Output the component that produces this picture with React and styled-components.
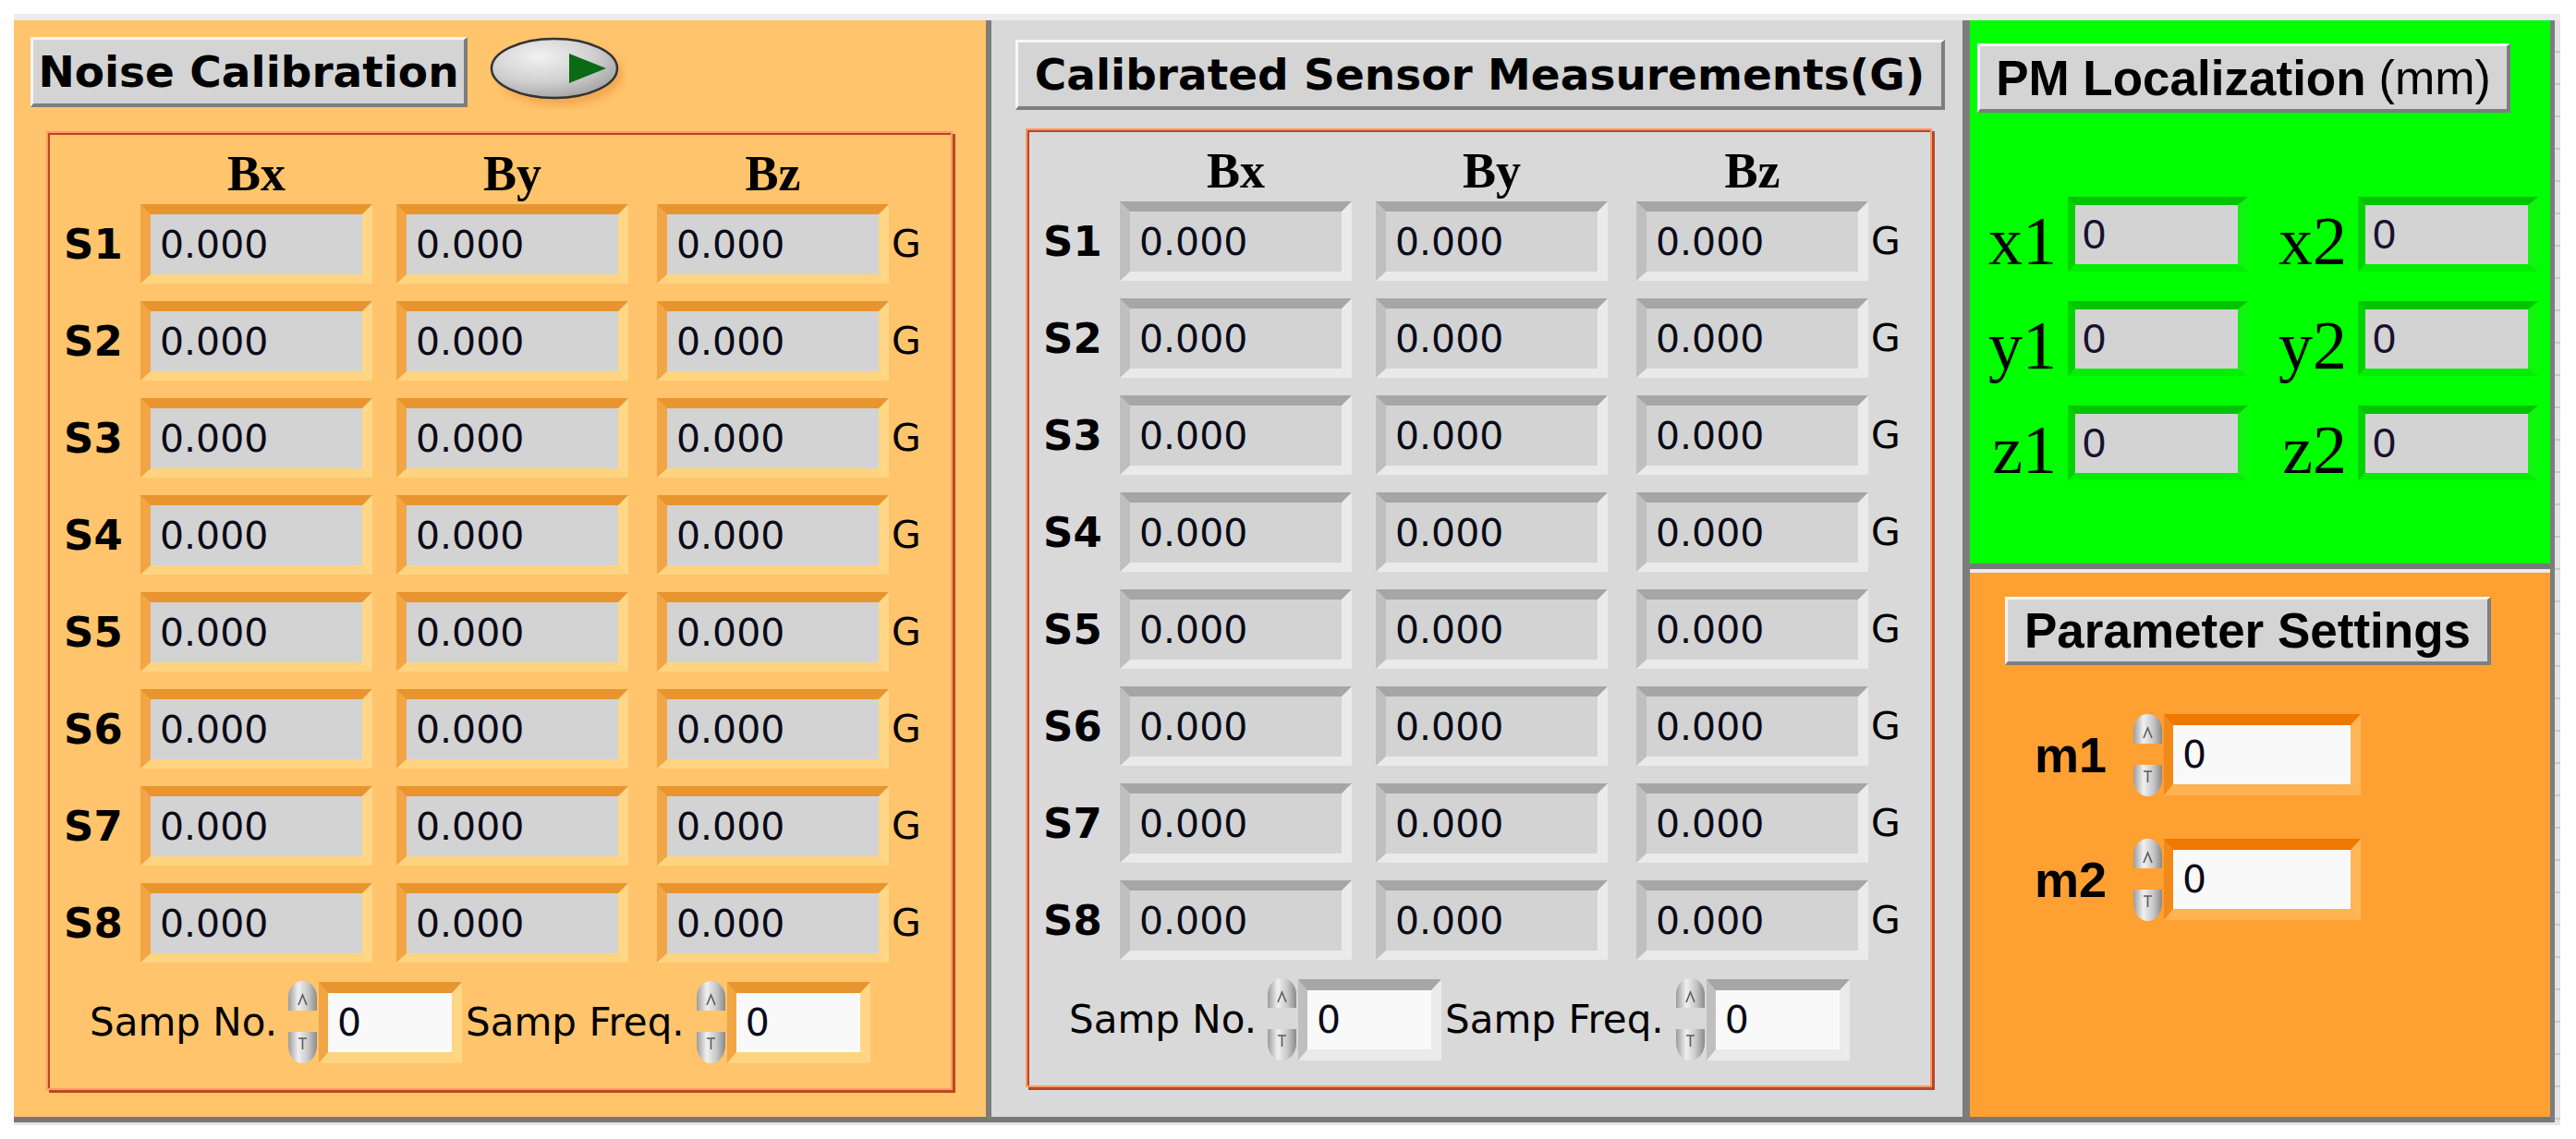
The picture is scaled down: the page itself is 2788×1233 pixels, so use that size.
import React from "react";
import styled, { createGlobalStyle } from "styled-components";

const DEJAVU = `"DejaVu Sans", Verdana, sans-serif`;
const ARIAL = `"Liberation Sans", Arial, sans-serif`;
const TIMES = `"Liberation Serif", "Times New Roman", serif`;

const themes = {
  amber: {
    panel: "#FFC46C",
    top: "#E8952F",
    left: "#F2A544",
    right: "#FFD786",
    bottom: "#FFD480",
  },
  silver: {
    panel: "#D9D9D9",
    top: "#A6A6A6",
    left: "#BFBFBF",
    right: "#EBEBEB",
    bottom: "#EAEAEA",
  },
};

const GlobalStyle = createGlobalStyle`
  html, body {
    margin: 0;
    background: #ffffff;
  }
  body {
    width: 2788px;
    height: 1233px;
    overflow: hidden;
  }
`;

const Page = styled.div`
  padding: 15px 0 0 15px;
`;

const Frame = styled.div`
  display: flex;
  width: 2756px;
  border-top: 7px solid #ececec;
  border-bottom: 3px solid #e6e6e6;
`;

const Panel = styled.section`
  width: ${(p) => p.$w}px;
  padding-top: ${(p) => p.$padTop}px;
  height: ${(p) => 1187 - p.$padTop}px;
  background: ${(p) => p.$bg};
  border-right: ${(p) => p.$edge}px solid #7c7c7c;
  border-bottom: 6px solid #787878;
`;

const TitleRow = styled.div`
  display: flex;
  align-items: flex-start;
  gap: 22px;
  margin-left: ${(p) => p.$inset}px;
`;

const Caption = styled.div`
  box-sizing: border-box;
  width: ${(p) => p.$w}px;
  height: ${(p) => p.$h || 76}px;
  margin-left: ${(p) => p.$inset || 0}px;
  display: flex;
  align-items: center;
  justify-content: center;
  background: #d4d4d4;
  border-top: 3px solid #f6f6f6;
  border-left: 3px solid #f6f6f6;
  border-right: 4px solid #7e7e7e;
  border-bottom: 4px solid #7e7e7e;
  font-family: ${(p) => (p.$face === "arial" ? ARIAL : DEJAVU)};
  font-size: ${(p) => (p.$face === "arial" ? 53 : 47)}px;
  font-weight: bold;
  color: #000;
  white-space: nowrap;

  small {
    font-size: 52px;
    font-weight: normal;
    margin-left: 14px;
  }
`;

const Groove = styled.div`
  box-sizing: border-box;
  width: 981px;
  height: 1038px;
  margin: ${(p) => p.$gap}px 0 0 ${(p) => p.$inset}px;
  padding: 17px 0 0 17px;
  border: 2px solid #ff9a68;
  box-shadow: inset 2px 2px 0 #b8481e, 3px 3px 0 #b8481e;
`;

const Columns = styled.div`
  display: grid;
  grid-template-columns: 83px 277px 282px 254px auto;
  align-items: center;
`;

const HeadRow = styled(Columns)`
  height: 54px;
  margin-bottom: 6px;
`;

const HeadCell = styled.div`
  width: 251px;
  text-align: center;
  font-family: ${TIMES};
  font-size: 54px;
  font-weight: bold;
  line-height: 54px;
  color: #000;
`;

const Rows = styled.div`
  display: flex;
  flex-direction: column;
  gap: 19px;
`;

const Row = styled(Columns)`
  height: 86px;
`;

const RowLabel = styled.div`
  font-family: ${DEJAVU};
  font-size: 45px;
  font-weight: bold;
  color: #000;
`;

const Readout = styled.div`
  box-sizing: border-box;
  width: 251px;
  height: 86px;
  display: flex;
  align-items: center;
  padding-left: 10px;
  background: #d3d3d3;
  border-style: solid;
  border-width: 11px 11px 10px 11px;
  border-color: ${(p) => p.$t.top} ${(p) => p.$t.right} ${(p) => p.$t.bottom}
    ${(p) => p.$t.left};
  font-family: ${DEJAVU};
  font-size: 41px;
  color: #0a0a18;
`;

const Unit = styled.div`
  font-family: ${DEJAVU};
  font-size: 41px;
  color: #000;
`;

const ControlRow = styled.div`
  display: flex;
  align-items: center;
  height: 91px;
  margin-top: 19px;
  padding-left: 28px;
`;

const CtrlLabel = styled.span`
  font-family: ${DEJAVU};
  font-size: 42px;
  color: #000;
  margin-left: ${(p) => p.$gap || 0}px;
  margin-right: ${(p) => p.$after || 0}px;
`;

const NumInput = styled.div`
  box-sizing: border-box;
  width: ${(p) => p.$w || 155}px;
  height: 88px;
  display: flex;
  align-items: center;
  padding-left: 10px;
  background: #f9f9f9;
  border-style: solid;
  border-width: 12px 11px 12px 10px;
  border-color: ${(p) => p.$t.top} ${(p) => p.$t.right} ${(p) => p.$t.bottom}
    ${(p) => p.$t.left};
  font-family: ${DEJAVU};
  font-size: 41px;
  color: #0a0a18;
`;

const SpinSvg = styled.svg`
  display: block;
  flex: none;
`;

const RightColumn = styled.div`
  width: 628px;
  display: flex;
  flex-direction: column;
  border-right: 5px solid #7c7c7c;
`;

const GreenPane = styled.div`
  height: 563px;
  padding-top: 25px;
  background: #00ff00;
  border-bottom: 6px solid #787878;
`;

const CoordGrid = styled.div`
  display: grid;
  grid-template-columns: 93px 195px 119px 195px;
  grid-auto-rows: 81px;
  row-gap: 32px;
  margin: 91px 0 0 13px;
`;

const CoordLabel = styled.div`
  justify-self: end;
  align-self: end;
  padding-right: 12px;
  margin-bottom: -4px;
  font-family: ${TIMES};
  font-size: 74px;
  line-height: 74px;
  color: #000;
`;

const CoordField = styled.div`
  box-sizing: border-box;
  width: 195px;
  height: 81px;
  display: flex;
  align-items: center;
  padding-left: 8px;
  background: #d3d3d3;
  border-style: solid;
  border-width: 9px 11px 8px 8px;
  border-color: #00c400 #10f410 #00f000 #00d400;
  font-family: ${ARIAL};
  font-size: 45px;
  color: #1a1030;
`;

const ParamPane = styled.div`
  height: 563px;
  padding-top: 26px;
  background: #ffa033;
  border-top: 4px solid #ececec;
  border-bottom: 6px solid #787878;
`;

const ParamList = styled.div`
  display: flex;
  flex-direction: column;
  gap: 45px;
  margin: 52px 0 0 70px;
`;

const ParamRow = styled.div`
  display: flex;
  align-items: center;
  height: 90px;
`;

const ParamLabel = styled.span`
  width: 105px;
  font-family: ${ARIAL};
  font-size: 54px;
  font-weight: bold;
  color: #000;
`;

const TickStrip = styled.div`
  width: 6px;
  background: repeating-linear-gradient(
    to bottom,
    #e4e4e4 0,
    #e4e4e4 33px,
    #c9c9c9 33px,
    #c9c9c9 35px
  );
`;

const paramBevel = {
  top: "#EE7800",
  left: "#F28A1A",
  right: "#FFB656",
  bottom: "#FFB352",
};

function PlayButton() {
  return (
    <svg width="150" height="84" viewBox="0 0 150 84" style={{ marginTop: -5 }}>
      <defs>
        <radialGradient id="playFill" cx="0.38" cy="0.3" r="0.8">
          <stop offset="0" stopColor="#f2f2f2" />
          <stop offset="0.55" stopColor="#cfcfcf" />
          <stop offset="1" stopColor="#9a9a9a" />
        </radialGradient>
        <filter id="playGlow" x="-20%" y="-30%" width="140%" height="160%">
          <feGaussianBlur stdDeviation="4" />
        </filter>
      </defs>
      <ellipse cx="78" cy="46" rx="68" ry="33" fill="#e8923a" opacity="0.55" filter="url(#playGlow)" />
      <ellipse cx="72" cy="39" rx="68" ry="32" fill="url(#playFill)" stroke="#333" strokeWidth="2.5" />
      <polygon points="88,23 128,39 88,55" fill="#0c6a14" />
    </svg>
  );
}

function Spinner() {
  return (
    <SpinSvg width="35" height="91" viewBox="0 0 35 91">
      <defs>
        <linearGradient id="spinFill" x1="0" y1="0" x2="1" y2="0">
          <stop offset="0" stopColor="#9c9c9c" />
          <stop offset="0.35" stopColor="#f0f0f0" />
          <stop offset="0.7" stopColor="#c6c6c6" />
          <stop offset="1" stopColor="#8a8a8a" />
        </linearGradient>
      </defs>
      <path d="M2,33 L2,19 C2,8 9,1 17.5,1 C26,1 33,8 33,19 L33,33 Z" fill="url(#spinFill)" />
      <path d="M13,27 L17.5,16 L22,27" fill="none" stroke="#5a5a5a" strokeWidth="1.6" />
      <path d="M2,56 L33,56 L33,71 C33,82 26,90 17.5,90 C9,90 2,82 2,71 Z" fill="url(#spinFill)" />
      <path d="M13,63 L22,63 M17.5,63 L17.5,75" fill="none" stroke="#5a5a5a" strokeWidth="1.6" />
    </SpinSvg>
  );
}

const SENSORS = ["S1", "S2", "S3", "S4", "S5", "S6", "S7", "S8"];

function SensorTable({ theme }) {
  return (
    <>
      <HeadRow>
        <span />
        <HeadCell>Bx</HeadCell>
        <HeadCell>By</HeadCell>
        <HeadCell>Bz</HeadCell>
      </HeadRow>
      <Rows>
        {SENSORS.map((s) => (
          <Row key={s}>
            <RowLabel>{s}</RowLabel>
            <Readout $t={theme}>0.000</Readout>
            <Readout $t={theme}>0.000</Readout>
            <Readout $t={theme}>0.000</Readout>
            <Unit>G</Unit>
          </Row>
        ))}
      </Rows>
      <ControlRow>
        <CtrlLabel $after={10}>Samp No.</CtrlLabel>
        <Spinner />
        <NumInput $t={theme}>0</NumInput>
        <CtrlLabel $gap={4} $after={11}>Samp Freq.</CtrlLabel>
        <Spinner />
        <NumInput $t={theme}>0</NumInput>
      </ControlRow>
    </>
  );
}

const COORDS = [
  ["x1", "x2"],
  ["y1", "y2"],
  ["z1", "z2"],
];

export default function App() {
  return (
    <Page>
      <GlobalStyle />
      <Frame>
        <Panel $w={1052} $padTop={18} $edge={6} $bg={themes.amber.panel}>
          <TitleRow $inset={18}>
            <Caption $w={473}>Noise Calibration</Caption>
            <PlayButton />
          </TitleRow>
          <Groove $gap={23} $inset={35}>
            <SensorTable theme={themes.amber} />
          </Groove>
        </Panel>

        <Panel $w={1051} $padTop={21} $edge={8} $bg={themes.silver.panel}>
          <Caption $w={1006} $inset={26}>
            Calibrated Sensor Measurements(G)
          </Caption>
          <Groove $gap={20} $inset={37}>
            <SensorTable theme={themes.silver} />
          </Groove>
        </Panel>

        <RightColumn>
          <GreenPane>
            <Caption $w={577} $h={75} $inset={8} $face="arial">
              PM Localization<small>(mm)</small>
            </Caption>
            <CoordGrid>
              {COORDS.map(([a, b]) => (
                <React.Fragment key={a}>
                  <CoordLabel>{a}</CoordLabel>
                  <CoordField>0</CoordField>
                  <CoordLabel>{b}</CoordLabel>
                  <CoordField>0</CoordField>
                </React.Fragment>
              ))}
            </CoordGrid>
          </GreenPane>
          <ParamPane>
            <Caption $w={526} $h={74} $inset={38} $face="arial">
              Parameter Settings
            </Caption>
            <ParamList>
              {["m1", "m2"].map((m) => (
                <ParamRow key={m}>
                  <ParamLabel>{m}</ParamLabel>
                  <Spinner />
                  <NumInput $w={213} $t={paramBevel}>
                    0
                  </NumInput>
                </ParamRow>
              ))}
            </ParamList>
          </ParamPane>
        </RightColumn>
        <TickStrip />
      </Frame>
    </Page>
  );
}
